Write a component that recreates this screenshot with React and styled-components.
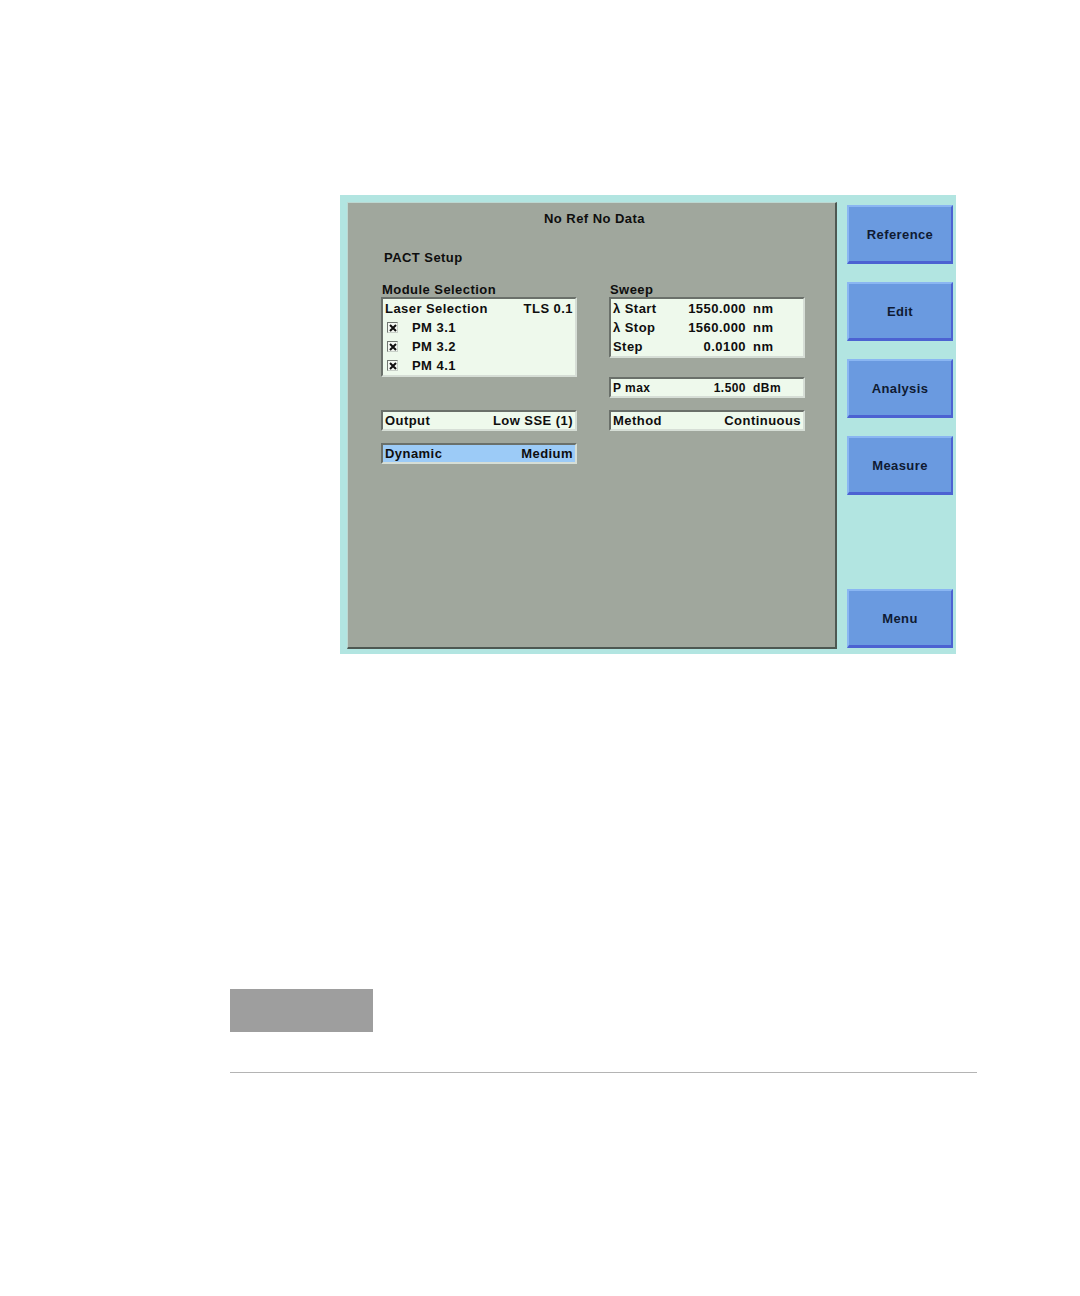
import React from 'react'
import styled, { createGlobalStyle } from 'styled-components'

const GlobalStyle = createGlobalStyle`
  html, body {
    margin: 0;
    padding: 0;
    background: #ffffff;
  }
  body {
    font-family: "Liberation Sans", Arial, sans-serif;
  }
`

const moduleRows = ['PM 3.1', 'PM 3.2', 'PM 4.1']

const sweepRows = [
  { label: 'λ Start', value: '1550.000', unit: 'nm' },
  { label: 'λ Stop', value: '1560.000', unit: 'nm' },
  { label: 'Step', value: '0.0100', unit: 'nm' },
]

const softkeys = ['Reference', 'Edit', 'Analysis', 'Measure']

function CheckMark() {
  return (
    <CheckBox>
      <svg width="8" height="8" viewBox="0 0 8 8">
        <path d="M1 1 L7 7 M7 1 L1 7" stroke="#101010" strokeWidth="2" />
      </svg>
    </CheckBox>
  )
}

export default function App() {
  return (
    <Page>
      <GlobalStyle />
      <Screen>
        <Panel>
          <Title>No Ref No Data</Title>
          <Heading>PACT Setup</Heading>
          <Columns>
            <Column>
              <GroupLabel>Module Selection</GroupLabel>
              <Field>
                <Row>
                  <Label>Laser Selection</Label>
                  <Value>TLS 0.1</Value>
                </Row>
                {moduleRows.map((m) => (
                  <Row key={m}>
                    <CheckMark />
                    <Label>{m}</Label>
                  </Row>
                ))}
              </Field>
              <Field $gap={33}>
                <Row $single>
                  <Label>Output</Label>
                  <Value>Low SSE (1)</Value>
                </Row>
              </Field>
              <Field $gap={12} $selected>
                <Row $single>
                  <Label>Dynamic</Label>
                  <Value>Medium</Value>
                </Row>
              </Field>
            </Column>
            <Column>
              <GroupLabel>Sweep</GroupLabel>
              <Field>
                {sweepRows.map((r) => (
                  <Row key={r.label}>
                    <Label>{r.label}</Label>
                    <Value>{r.value}</Value>
                    <Unit>{r.unit}</Unit>
                  </Row>
                ))}
              </Field>
              <Field $gap={19}>
                <Row $single $small>
                  <Label>P max</Label>
                  <Value>1.500</Value>
                  <Unit>dBm</Unit>
                </Row>
              </Field>
              <Field $gap={12}>
                <Row $single>
                  <Label>Method</Label>
                  <Value>Continuous</Value>
                </Row>
              </Field>
            </Column>
          </Columns>
        </Panel>
        <Softkeys>
          {softkeys.map((k) => (
            <Softkey key={k}>{k}</Softkey>
          ))}
          <Softkey $bottom>Menu</Softkey>
        </Softkeys>
      </Screen>
      <Footer>
        <GreyTab />
        <Rule />
      </Footer>
    </Page>
  )
}

const Page = styled.div`
  padding-top: 195px;
  padding-bottom: 223px;
`

const Screen = styled.div`
  margin-left: 340px;
  width: 616px;
  height: 459px;
  box-sizing: border-box;
  padding: 7px 3px 5px 7px;
  background: #b2e5e1;
  display: flex;
  gap: 10px;
`

const Panel = styled.div`
  width: 490px;
  box-sizing: border-box;
  background: #a0a79d;
  border-style: solid;
  border-width: 1px 2px 2px 1px;
  border-color: #bcd8d2 #4e5852 #4e5852 #bcd8d2;
  padding: 8px 0 0 33px;
  color: #0e0e0e;
  font-size: 13px;
  font-weight: bold;
  letter-spacing: 0.45px;
`

const Title = styled.div`
  text-align: center;
  line-height: 16px;
  margin-left: -33px;
  padding-left: 6px;
`

const Heading = styled.div`
  line-height: 16px;
  margin-top: 23px;
  padding-left: 3px;
`

const Columns = styled.div`
  display: grid;
  grid-template-columns: 196px 196px;
  column-gap: 32px;
  margin-top: 17px;
`

const Column = styled.div`
  display: flex;
  flex-direction: column;
`

const GroupLabel = styled.div`
  line-height: 14px;
  padding-left: 1px;
`

const Field = styled.div`
  margin-top: ${(p) => p.$gap || 0}px;
  background: ${(p) => (p.$selected ? '#9ccbf7' : '#eef9ec')};
  border-style: solid;
  border-width: 2px;
  border-color: #6a706a #d6ded6 #d6ded6 #6a706a;
`

const Row = styled.div`
  display: flex;
  align-items: center;
  height: ${(p) => (p.$single ? 15 : 17)}px;
  padding: 1px 2px 1px 2px;
  white-space: nowrap;
  font-size: ${(p) => (p.$small ? 12 : 13)}px;
`

const Label = styled.span`
  flex: 1;
`

const Value = styled.span`
  text-align: right;
`

const Unit = styled.span`
  width: 48px;
  margin-left: 7px;
`

const CheckBox = styled.span`
  width: 9px;
  height: 9px;
  margin: 0 14px 0 2px;
  display: inline-flex;
  align-items: center;
  justify-content: center;
  background: #f4f8f2;
  border-style: solid;
  border-width: 1px;
  border-color: #707670 #c8d0c8 #c8d0c8 #707670;
`

const Softkeys = styled.div`
  width: 106px;
  display: flex;
  flex-direction: column;
  gap: 18px;
  padding: 3px 0 0;
`

const Softkey = styled.div`
  height: 59px;
  box-sizing: border-box;
  margin-top: ${(p) => (p.$bottom ? 'auto' : '0')};
  margin-bottom: ${(p) => (p.$bottom ? '1px' : '0')};
  display: flex;
  align-items: center;
  justify-content: center;
  background: #6a9ae0;
  border-style: solid;
  border-width: 2px 2px 3px 2px;
  border-color: #8ab6f2 #4c62d2 #4c62d2 #8ab6f2;
  color: #0f1a33;
  font-size: 13px;
  font-weight: bold;
  letter-spacing: 0.4px;
`

const Footer = styled.div`
  margin-left: 230px;
  width: 747px;
`

const GreyTab = styled.div`
  margin-top: 335px;
  width: 143px;
  height: 43px;
  background: #9e9e9e;
`

const Rule = styled.div`
  margin-top: 40px;
  height: 1px;
  background: #b4b4b4;
`
